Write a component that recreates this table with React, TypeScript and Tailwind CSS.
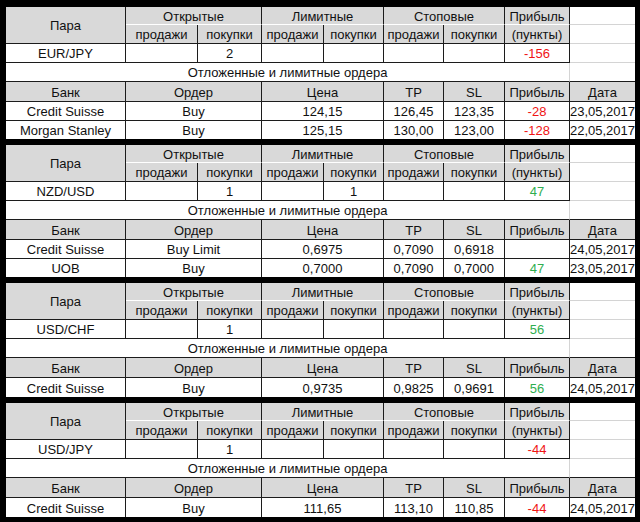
type Profit = { v: string; c: "red" | "green" | "" };

type Order = {
  bank: string;
  order: string;
  price: string;
  tp: string;
  sl: string;
  profit: Profit;
  date: string;
};

type Block = {
  pair: string;
  open: [string, string];
  limit: [string, string];
  stop: [string, string];
  profit: Profit;
  orders: Order[];
};

const blocks: Block[] = [
  {
    pair: "EUR/JPY",
    open: ["", "2"],
    limit: ["", ""],
    stop: ["", ""],
    profit: { v: "-156", c: "red" },
    orders: [
      { bank: "Credit Suisse", order: "Buy", price: "124,15", tp: "126,45", sl: "123,35", profit: { v: "-28", c: "red" }, date: "23,05,2017" },
      { bank: "Morgan Stanley", order: "Buy", price: "125,15", tp: "130,00", sl: "123,00", profit: { v: "-128", c: "red" }, date: "22,05,2017" },
    ],
  },
  {
    pair: "NZD/USD",
    open: ["", "1"],
    limit: ["", "1"],
    stop: ["", ""],
    profit: { v: "47", c: "green" },
    orders: [
      { bank: "Credit Suisse", order: "Buy Limit", price: "0,6975", tp: "0,7090", sl: "0,6918", profit: { v: "", c: "" }, date: "24,05,2017" },
      { bank: "UOB", order: "Buy", price: "0,7000", tp: "0,7090", sl: "0,7000", profit: { v: "47", c: "green" }, date: "23,05,2017" },
    ],
  },
  {
    pair: "USD/CHF",
    open: ["", "1"],
    limit: ["", ""],
    stop: ["", ""],
    profit: { v: "56", c: "green" },
    orders: [
      { bank: "Credit Suisse", order: "Buy", price: "0,9735", tp: "0,9825", sl: "0,9691", profit: { v: "56", c: "green" }, date: "24,05,2017" },
    ],
  },
  {
    pair: "USD/JPY",
    open: ["", "1"],
    limit: ["", ""],
    stop: ["", ""],
    profit: { v: "-44", c: "red" },
    orders: [
      { bank: "Credit Suisse", order: "Buy", price: "111,65", tp: "113,10", sl: "110,85", profit: { v: "-44", c: "red" }, date: "24,05,2017" },
    ],
  },
];

const base =
  "flex items-center justify-center border-r border-b whitespace-nowrap overflow-hidden text-[13px] leading-none pt-px";
const dark = "border-r-[#1c1c1c] border-b-[#1c1c1c]";
const gray = "bg-[#d9d9d9]";

function color(c: Profit["c"]) {
  if (c === "red") return "text-[#f01414]";
  if (c === "green") return "text-[#2fae4f]";
  return "";
}

function Section({ b }: { b: Block }) {
  const rows =
    b.orders.length === 2
      ? "grid-rows-[18px_19px_19px_19px_20px_19px_18px]"
      : "grid-rows-[18px_19px_19px_19px_20px_19px]";

  return (
    <div className={`grid grid-cols-[120px_72px_64px_62px_60px_60px_61px_65px_65px] ${rows} bg-white`}>
      {/* header row 1 */}
      <div className={`${base} ${dark} ${gray} row-span-2`}>Пара</div>
      <div className={`${base} ${gray} col-span-2 border-r-[#1c1c1c] border-b-white`}>Открытые</div>
      <div className={`${base} ${gray} col-span-2 border-r-[#1c1c1c] border-b-white`}>Лимитные</div>
      <div className={`${base} ${gray} col-span-2 border-r-[#1c1c1c] border-b-white`}>Стоповые</div>
      <div className={`${base} ${gray} border-r-[#1c1c1c] border-b-white`}>Прибыль</div>
      <div className={`${base} border-r-0 border-b-[#d4d4d4]`} />

      {/* header row 2 */}
      {["продажи", "покупки", "продажи", "покупки", "продажи", "покупки"].map((t, i) => (
        <div key={i} className={`${base} ${dark} ${gray}`}>
          {t}
        </div>
      ))}
      <div className={`${base} ${dark} ${gray}`}>(пункты)</div>
      <div className={`${base} border-r-0 border-b-[#d4d4d4]`} />

      {/* position row */}
      <div className={`${base} ${dark}`}>{b.pair}</div>
      {[...b.open, ...b.limit, ...b.stop].map((t, i) => (
        <div key={i} className={`${base} ${dark}`}>
          {t}
        </div>
      ))}
      <div className={`${base} ${dark} ${color(b.profit.c)}`}>{b.profit.v}</div>
      <div className={`${base} border-r-0 border-b-[#d4d4d4]`} />

      {/* pending title */}
      <div className={`${base} col-span-8 border-r-[#d4d4d4] border-b-[#1c1c1c]`}>
        Отложенные и лимитные ордера
      </div>
      <div className={`${base} border-r-0 border-b-[#1c1c1c]`} />

      {/* orders header */}
      <div className={`${base} ${dark} ${gray}`}>Банк</div>
      <div className={`${base} ${dark} ${gray} col-span-2`}>Ордер</div>
      <div className={`${base} ${dark} ${gray} col-span-2`}>Цена</div>
      <div className={`${base} ${dark} ${gray}`}>TP</div>
      <div className={`${base} ${dark} ${gray}`}>SL</div>
      <div className={`${base} ${dark} ${gray}`}>Прибыль</div>
      <div className={`${base} ${gray} border-r-0 border-b-[#1c1c1c]`}>Дата</div>

      {b.orders.map((o, i) => {
        const last = i === b.orders.length - 1;
        const bb = last ? "border-b-0" : "";
        return (
          <div key={i} className="contents">
            <div className={`${base} ${dark} ${bb}`}>{o.bank}</div>
            <div className={`${base} ${dark} ${bb} col-span-2`}>{o.order}</div>
            <div className={`${base} ${dark} ${bb} col-span-2`}>{o.price}</div>
            <div className={`${base} ${dark} ${bb}`}>{o.tp}</div>
            <div className={`${base} ${dark} ${bb}`}>{o.sl}</div>
            <div className={`${base} ${dark} ${bb} ${color(o.profit.c)}`}>{o.profit.v}</div>
            <div className={`${base} ${dark} ${bb} border-r-0`}>{o.date}</div>
          </div>
        );
      })}
    </div>
  );
}

export default function App() {
  return (
    <div className="w-[640px] h-[522px] bg-black pt-[7px] pl-[6px] pr-[5px] pb-[5px] flex flex-col gap-[6px] text-[#111] [font-family:'Liberation_Sans',Arial,sans-serif] overflow-hidden">
      {blocks.map((b) => (
        <Section key={b.pair} b={b} />
      ))}
    </div>
  );
}
